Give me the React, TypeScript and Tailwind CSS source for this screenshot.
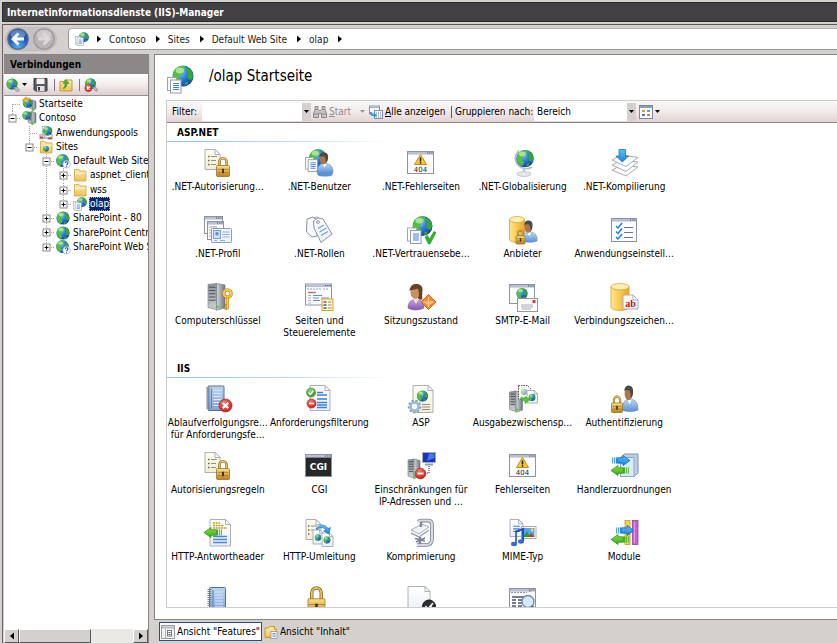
import type { ReactNode } from "react";

/* ---------- shared gradients ---------- */

function Gradients() {
  const linear: [string, string, string, boolean][] = [
    ["gold", "#fbe08a", "#b9821c", false],
    ["db", "#ffe88a", "#f0a61c", true],
    ["steel", "#d3d8db", "#6f777c", true],
    ["steelFront", "#8d959a", "#c9ced1", false],
    ["blueBody", "#b9d6f5", "#5b93d4", false],
    ["purple", "#c4a5e0", "#8257b3", false],
    ["blueArrow", "#58c4fb", "#1c7fd6", false],
    ["greenArrow", "#8be33c", "#36a81b", false],
    ["page", "#ffffff", "#e9eef6", false],
    ["cream", "#fffdf0", "#f1edcf", false],
    ["folder", "#fdedb0", "#eebf52", false],
    ["book", "#bcd3f2", "#7ea2d6", false],
  ];
  return (
    <svg className="absolute h-0 w-0" aria-hidden="true">
      <defs>
        {linear.map(([id, a, b, horizontal]) => (
          <linearGradient key={id} id={id} x1="0" y1="0" x2={horizontal ? "1" : "0"} y2={horizontal ? "0" : "1"}>
            <stop offset="0" stopColor={a} />
            <stop offset="1" stopColor={b} />
          </linearGradient>
        ))}
        <radialGradient id="ocean" cx="0.35" cy="0.3" r="0.8">
          <stop offset="0" stopColor="#8fd0ff" />
          <stop offset="0.45" stopColor="#2f7be0" />
          <stop offset="1" stopColor="#0f359c" />
        </radialGradient>
        <radialGradient id="nav" cx="0.5" cy="0.85" r="0.9">
          <stop offset="0" stopColor="#4fb4f2" />
          <stop offset="0.5" stopColor="#1f5fc0" />
          <stop offset="1" stopColor="#1a3f93" />
        </radialGradient>
        <radialGradient id="redBall" cx="0.4" cy="0.3" r="0.8">
          <stop offset="0" stopColor="#f47a6c" />
          <stop offset="1" stopColor="#c0160f" />
        </radialGradient>
        <radialGradient id="greenBall" cx="0.4" cy="0.3" r="0.8">
          <stop offset="0" stopColor="#8ad86a" />
          <stop offset="1" stopColor="#2d8f22" />
        </radialGradient>
      </defs>
    </svg>
  );
}

/* ---------- drawing parts ---------- */

type Box = { x: number; y: number; w: number; h: number };

function Globe({ cx, cy, r }: { cx: number; cy: number; r: number }) {
  return (
    <g transform={`translate(${cx} ${cy}) scale(${r / 10})`}>
      <circle r="10" fill="url(#ocean)" />
      <path d="M-8.6 -4.6 C-6 -9 -2 -9.8 1 -9.4 L3 -7 L0 -5.5 L1 -3 L-2.5 -1 L-4 2 L-1 3.5 L-2 7 L-4 8.6 C-7.5 6.5 -9.6 2.5 -9.5 -1 Z" fill="#52c233" />
      <path d="M4 -8.6 C7.5 -6.6 9.4 -3.5 9.6 0 L8 4 L5.5 3 L3.5 0 L5 -3 L3 -5.5 Z" fill="#35a82d" />
      <path d="M2 6 L5 5.4 L4.5 8 L1.5 9 Z" fill="#3aa82c" />
      <ellipse cx="-3" cy="-5.2" rx="4" ry="2.8" fill="#fff" opacity="0.5" />
    </g>
  );
}

function Doc({ x, y, w, h, cream, lines }: Box & { cream?: boolean; lines?: boolean }) {
  const f = Math.min(5, w / 3);
  return (
    <g stroke="#a3a7b4" strokeWidth="0.9">
      <path d={`M${x} ${y}h${w - f}l${f} ${f}v${h - f}h${-w}z`} fill={cream ? "url(#cream)" : "url(#page)"} />
      <path d={`M${x + w - f} ${y}v${f}h${f}z`} fill="#fff" />
      {lines && (
        <path
          d={`M${x + w * 0.25} ${y + h * 0.4}h${w * 0.5}M${x + w * 0.25} ${y + h * 0.55}h${w * 0.5}M${x + w * 0.25} ${y + h * 0.7}h${w * 0.5}`}
          stroke="#3f7fd6"
          strokeWidth="1.1"
        />
      )}
    </g>
  );
}

function Sheets({ x, y, s = 1 }: { x: number; y: number; s?: number }) {
  return (
    <g transform={`translate(${x} ${y}) scale(${s})`}>
      <rect x="0.5" y="0.5" width="9" height="13" fill="#fff" stroke="#a0a4ae" />
      <rect x="3.5" y="3" width="10.5" height="13" fill="#fff" stroke="#9298a6" />
      <path d="M6 6.5h6M6 8.5h6M6 10.5h6M6 12.5h6" stroke="#3c7ee0" />
    </g>
  );
}

function Win({ x, y, w, h, fill = "#fdfdff" }: Box & { fill?: string }) {
  return (
    <g>
      <rect x={x + 0.5} y={y + 0.5} width={w - 1} height={h - 1} fill={fill} stroke="#8e93a3" />
      <rect x={x + 1} y={y + 1} width={w - 2} height="2.6" fill="#b9c0d6" />
      <path d={`M${x + w - 7} ${y + 2}h1.2m1 0h1.2m1 0h1.2`} stroke="#4b5577" />
    </g>
  );
}

function Lock({ x, y, w, h }: Box) {
  const b = h * 0.42;
  const shackle = `M${x + w * 0.22} ${y + b + 1}V${y + w * 0.36}a${w * 0.28} ${w * 0.3} 0 0 1 ${w * 0.56} 0V${y + b + 1}`;
  return (
    <g>
      <path d={shackle} fill="none" stroke="#8a651c" strokeWidth={w * 0.2} />
      <path d={shackle} fill="none" stroke="#e6c26c" strokeWidth={w * 0.11} />
      <rect x={x} y={y + b} width={w} height={h - b} rx="1" fill="url(#gold)" stroke="#8f671a" strokeWidth="0.7" />
      <path
        d={`M${x + 1} ${y + b + (h - b) * 0.35}h${w - 2}M${x + 1} ${y + b + (h - b) * 0.65}h${w - 2}`}
        stroke="#a67823"
        strokeWidth="0.8"
      />
      <rect x={x + w * 0.43} y={y + b + (h - b) * 0.3} width={w * 0.14} height={(h - b) * 0.4} fill="#3d2a08" />
    </g>
  );
}

function Person({ x, y, body = "url(#blueBody)" }: { x: number; y: number; body?: string }) {
  return (
    <g transform={`translate(${x} ${y})`}>
      <path d="M0 19C0 13 3 10.5 8 10.5S16 13 16 19C12 20.6 4 20.6 0 19Z" fill={body} stroke="#5f7fae" strokeWidth="0.5" />
      <path d="M5.5 10.6L7.5 14.5L9.6 10.6Z" fill="#fff" />
      <ellipse cx="6.6" cy="6" rx="4" ry="5.2" fill="#a9784c" />
      <path d="M2.4 4C2.4 0.6 5 -0.6 7.4 -0.4C10.6 -0.2 11.6 2.6 11 5.4C10.6 8 9.6 9 8.6 9.4C9 7 8.6 5.4 7.6 3.6C6 3 4 3 2.4 4Z" fill="#4a4948" />
    </g>
  );
}

function Server({ x, y, w, h }: Box) {
  return (
    <g>
      <path d={`M${x} ${y + 1}l${w * 0.5} -1v${h - 1}l${-w * 0.5} -2z`} fill="url(#steelFront)" stroke="#6c7377" strokeWidth="0.6" />
      <path d={`M${x + w * 0.5} ${y}l${w * 0.5} 1.4v${h - 4}l${-w * 0.5} 2.4z`} fill="url(#steel)" stroke="#6c7377" strokeWidth="0.6" />
      {[0.14, 0.26, 0.38, 0.5, 0.62].map((t) => (
        <path key={t} d={`M${x + 1} ${y + h * t}h${w * 0.5 - 2}`} stroke="#4b555a" strokeWidth="1" />
      ))}
      <circle cx={x + w * 0.6} cy={y + h * 0.86} r="1.2" fill="#4bd433" />
    </g>
  );
}

function Database({ x, y, w, h }: Box) {
  const r = h * 0.12;
  return (
    <g stroke="#d39a22" strokeWidth="0.7">
      <path d={`M${x} ${y + r}v${h - 2 * r}a${w / 2} ${r} 0 0 0 ${w} 0v${-(h - 2 * r)}z`} fill="url(#db)" />
      <ellipse cx={x + w / 2} cy={y + r} rx={w / 2} ry={r} fill="#fff1b0" />
    </g>
  );
}

function Notebook({ x, y }: { x: number; y: number }) {
  return (
    <g transform={`translate(${x} ${y})`}>
      <rect x="2.5" y="0.5" width="16" height="24.5" rx="1" fill="url(#book)" stroke="#54709e" />
      <path d="M6 3v20" stroke="#5f82bb" />
      <path d="M8 5h8M8 8h8M8 11h8M8 14h8M8 17h8M8 20h8" stroke="#dbe8fa" />
      {[2, 4, 6, 8, 10, 12, 14, 16, 18, 20, 22].map((t) => (
        <path key={t} d={`M0.5 ${t + 0.5}h4`} stroke="#7b8290" />
      ))}
    </g>
  );
}

function Ball({ cx, cy, r, kind }: { cx: number; cy: number; r: number; kind: "x" | "minus" | "check" }) {
  const mark =
    kind === "x" ? "M-4 -4L4 4M4 -4L-4 4" : kind === "minus" ? "M-5.5 0H5.5" : "M-5 0L-1.5 4L5 -4";
  return (
    <g transform={`translate(${cx} ${cy}) scale(${r / 10})`}>
      <circle r="9.6" fill={kind === "check" ? "url(#greenBall)" : "url(#redBall)"} stroke={kind === "check" ? "#2f7d24" : "#9e2019"} />
      <path d={mark} fill="none" stroke="#fff" strokeWidth="3.2" />
    </g>
  );
}

function Arrow({ x, y, left }: { x: number; y: number; left?: boolean }) {
  return (
    <g transform={left ? `translate(${x + 18} ${y}) scale(-1 1)` : `translate(${x} ${y})`}>
      <path d="M5.5 2.8H11V0.5L18 5.5L11 10.5V8.2H5.5Z" fill={left ? "url(#greenArrow)" : "url(#blueArrow)"} stroke={left ? "#2f8f1a" : "#1a66b0"} strokeWidth="0.8" />
      <path d="M0.7 2.4v6.2M2.7 2.4v6.2M4.5 2.4v6.2" stroke={left ? "#46b324" : "#2c8fe0"} />
    </g>
  );
}

const permissions = (
  <g>
    <Doc x={1} y={0.5} w={15} h={20} cream />
    <path d="M4 7.5h1.5M4 11.5h1.5M4 15.5h1.5" stroke="#6b6448" strokeWidth="1.6" />
    <path d="M7 7.5h6M7 11.5h5M7 15.5h5" stroke="#8f8f86" />
    <Lock x={12.5} y={8.5} w={13} h={19} />
  </g>
);

const errorPage = (
  <g>
    <Win x={0} y={2} w={27} h={23} />
    <path d="M13.5 5.5L19.5 15.5H7.5Z" fill="#ffc928" stroke="#c98b0c" strokeLinejoin="round" />
    <path d="M13.5 8.5v4M13.5 13.3v1.4" stroke="#222" strokeWidth="1.6" />
    <text x="13.5" y="23" textAnchor="middle" fontSize="7" fill="#222" fontFamily="DejaVu Sans, sans-serif">
      404
    </text>
  </g>
);

/* ---------- feature icons, 28 x 28 ---------- */

const icons: Record<string, ReactNode> = {
  permissions,
  errorPage,
  users: (
    <g>
      <Globe cx={13} cy={9} r={9} />
      <Sheets x={0} y={8} s={0.9} />
      <Person x={12} y={4} />
      <path d="M12 23C12 27 14 27.5 20 27.5S28 27 28 23Z" fill="#5b93d4" />
    </g>
  ),
  globalization: (
    <g>
      <path d="M10 1.5C3.5 7 6 17.5 15 19.5C18 20 21 19.4 23 18" fill="none" stroke="#b9bdc1" strokeWidth="1.6" />
      <path d="M15 19v5" stroke="#c4c8cc" strokeWidth="2.4" />
      <ellipse cx="15" cy="25" rx="7" ry="2.4" fill="#e6e8ea" stroke="#b9bdc1" strokeWidth="0.8" />
      <Globe cx={16} cy={9.5} r={8.8} />
    </g>
  ),
  compile: (
    <g fill="#fff" stroke="#a6abb2" strokeLinejoin="round">
      <path d="M2 21L12 16L28 18L16 27Z" />
      <path d="M2 16L12 11L28 13L16 22.5Z" />
      <path d="M2 11L12 6L28 8.5L16 17.5Z" />
      <path d="M9 0.5h6.5v6.5h3.2L12.3 13L6 7H9Z" fill="url(#blueArrow)" stroke="#2375bd" strokeWidth="0.8" />
    </g>
  ),
  profile: (
    <g>
      <Win x={0} y={0} w={19} h={18} />
      <Win x={3} y={5} w={17} h={19} />
      <path d="M5 11h8M5 14h3M5 17h3M5 20h3" stroke="#9aa1b3" />
      <rect x="7.5" y="12.5" width="20" height="14" rx="1" fill="#eef3fa" stroke="#8f9bb2" />
      <rect x="9.5" y="14.5" width="7" height="8" fill="#cfe0f6" stroke="#7ba1dc" />
      <circle cx="13" cy="17.8" r="1.8" fill="#5f90d6" />
      <path d="M18.5 16h7M18.5 18.5h7M18.5 21h7M10 24.5h3m3 0h5" stroke="#8fb0e0" />
    </g>
  ),
  roles: (
    <g stroke="#8b93a3">
      <path d="M2 3L8 1L12 4V20L7 21L1.5 16Z" fill="#f7f8fb" />
      <path d="M9 3C11 -0.5 15 1 14.5 5" fill="none" />
      <path d="M8.5 5L13 2L18 3L27 18L16 26.5L9 12Z" fill="url(#page)" strokeLinejoin="round" />
      <circle cx="13" cy="6" r="1.4" fill="#fff" />
      <path d="M13 12.5L19 9M14.5 16L21.5 12M16 19.5L23 15.5" stroke="#6d9ce0" strokeWidth="1.2" />
    </g>
  ),
  trust: (
    <g>
      <Globe cx={15.5} cy={10} r={10} />
      <Sheets x={0} y={11.5} />
      <path d="M18 21L20.5 19.5L22.5 23L27 15.5L29 16.5L23 28H21.5Z" fill="#34b52a" stroke="#1f8a1c" strokeWidth="0.6" />
    </g>
  ),
  providers: (
    <g>
      <Database x={0.5} y={0.5} w={15} h={26} />
      <g transform="translate(13 5) scale(0.95 1.05)">
        <Person x={0} y={0} />
      </g>
      <Lock x={7} y={14} w={9} h={14} />
    </g>
  ),
  settings: (
    <g>
      <Win x={1} y={2} w={26} h={24} />
      <path d="M6 10l2 2 4-5M6 15.5l2 2 4-5M6 21l2 2 4-5" fill="none" stroke="#1e7fe0" strokeWidth="1.5" />
      <path d="M14 11.5h9M14 16.5h9M14 21.5h9" stroke="#6c7387" />
    </g>
  ),
  machineKey: (
    <g>
      <Server x={4} y={0.5} w={17} h={27} />
      <circle cx="23.5" cy="10.5" r="3.7" fill="none" stroke="#c98518" strokeWidth="3.2" />
      <circle cx="23.5" cy="10.5" r="3.7" fill="none" stroke="#ffc845" strokeWidth="2" />
      <path d="M23.5 14.5V26.5M23.5 25.5h-3M23.5 22h-2.6" stroke="#d08b16" strokeWidth="2.6" />
      <path d="M23.5 14.5V26" stroke="#ffc845" strokeWidth="1.2" />
    </g>
  ),
  controls: (
    <g>
      <Win x={0} y={0.5} w={27} h={22} />
      <path d="M2 6h14m2 0h6" stroke="#9ba2b4" strokeDasharray="2 1" />
      <path d="M3 9.5h8" stroke="#d86a5a" strokeWidth="1.4" />
      <path d="M3 12.5h3M3 15h3M3 17.5h3M3 20h3" stroke="#a6adbd" />
      <path d="M8 12.5h9M8 15h6m2 0h8M8 17.5h7" stroke="#5f8ed8" strokeWidth="1.2" />
      <rect x="17" y="16" width="11" height="11.5" fill="#fdf6cf" stroke="#d6a519" />
      <path d="M18.5 19h3M18.5 22h3M18.5 25h3" stroke="#7187ad" strokeWidth="1.8" />
      <path d="M23 19h3.5M23 22h3.5M23 25h3.5" stroke="#8b8f78" />
    </g>
  ),
  session: (
    <g>
      <path d="M1 25C1 19 4 16.5 9 16.5S17 19 17 25C13 27.6 4 27.6 1 25Z" fill="url(#purple)" stroke="#6c4699" strokeWidth="0.5" />
      <path d="M6 16L9 21L12 16Z" fill="#f6dfc2" />
      <ellipse cx="8.5" cy="9.5" rx="5" ry="6.5" fill="#c79163" />
      <path d="M2.5 8C3 2.5 6 0.5 10 1C15 1.6 16 5 15.4 9C15 12.6 15 14.6 15.6 16.6C13 17 11.6 16.4 11 15C12.6 12 12 8.6 10.6 5.6C8 6.8 5 6.6 2.5 8Z" fill="#6d3f22" />
      <path d="M21.5 11.5L29 19L21.5 26.5L14 19Z" fill="#f58a2a" stroke="#c4560c" strokeWidth="0.8" />
      <path d="M16.5 19h10M21.5 14v10M17 19l4.5 2.5L26 19" stroke="#ffd9a8" fill="none" strokeWidth="0.9" />
    </g>
  ),
  smtp: (
    <g>
      <Win x={0} y={1} w={26} h={20} />
      <Globe cx={13} cy={10.5} r={5.6} />
      <rect x="8.5" y="15.5" width="20" height="13" fill="#fdfdfd" stroke="#9397a4" />
      <rect x="23.5" y="17" width="3" height="3" fill="#d93a2e" />
      <path d="M12 22h12M12 24h12M13 26h9" stroke="#a6a9b3" />
    </g>
  ),
  connection: (
    <g>
      <Database x={1} y={0.5} w={18} h={27} />
      <Doc x={13} y={12} w={15} h={14} />
      <text x="20.5" y="23.5" textAnchor="middle" fontSize="10" fontWeight="bold" fill="#b01616" fontFamily="Liberation Serif, serif">
        ab
      </text>
    </g>
  ),
  failedRequests: (
    <g>
      <Notebook x={1.5} y={0.5} />
      <Ball cx={21.5} cy={20.5} r={6.8} kind="x" />
    </g>
  ),
  filtering: (
    <g>
      <Doc x={5} y={0.5} w={20} h={25} />
      <path d="M12 7.5h6M12 10h10M12 14h10M12 17.5h10M12 20h10M12 22.5h10" stroke="#3f7fd6" strokeWidth="1.3" />
      <Ball cx={6} cy={7.5} r={4.8} kind="check" />
      <Ball cx={6.5} cy={18.5} r={4.8} kind="minus" />
    </g>
  ),
  asp: (
    <g>
      <Doc x={6} y={0.5} w={20} h={27} cream />
      <Globe cx={15.5} cy={11} r={5.6} />
      <path d="M15 19.5h8M15 22h8M15 24.5h8" stroke="#8e92a0" />
      <circle cx="7.5" cy="21.5" r="5.6" fill="none" stroke="#7f9fc6" strokeWidth="2.4" strokeDasharray="2.2 1.6" />
      <circle cx="7.5" cy="21.5" r="4" fill="#fff" stroke="#9db8da" strokeWidth="2.6" />
    </g>
  ),
  outputCache: (
    <g>
      <Server x={0.5} y={6} w={13} h={21.5} />
      <path d="M9.5 0.5h9l3 3v10.5h-12z" fill="#f4f8f4" stroke="#555" strokeDasharray="1.5 1" />
      <g opacity="0.5">
        <Globe cx={15} cy={7} r={3} />
      </g>
      <Doc x={18} y={5.5} w={10.5} h={12.5} />
      <Globe cx={23} cy={12.5} r={3.4} />
      <path d="M12 12C12 15 14 16 16 16V18.5L21 14.8L16 11.5V13.4Z" fill="#53c932" stroke="#2d8f1c" strokeWidth="0.5" />
    </g>
  ),
  authentication: (
    <g>
      <g transform="translate(12 0.5) scale(1 1.25)">
        <Person x={0} y={0.5} />
      </g>
      <Lock x={1.5} y={11} w={11} h={16.5} />
    </g>
  ),
  cgi: (
    <g>
      <Win x={0} y={2} w={27} h={23} fill="#26282c" />
      <text x="13.5" y="17.5" textAnchor="middle" fontSize="9" fontWeight="bold" fill="#fff" fontFamily="DejaVu Sans, sans-serif">
        CGI
      </text>
    </g>
  ),
  ipRestrictions: (
    <g>
      <Server x={1} y={7} w={12} h={20} />
      <rect x="15.5" y="0.5" width="13" height="10" fill="#1737b8" stroke="#a9adb5" />
      <path d="M22 1.5h5.5v4.5L20 9Z" fill="#4d74ec" />
      <path d="M18 12.5h8" stroke="#9a9ea6" strokeWidth="2" />
      <path d="M22 14v7h-4" fill="none" stroke="#333" strokeDasharray="1 1" />
      <Ball cx={13.5} cy={21.5} r={5.6} kind="minus" />
    </g>
  ),
  handlers: (
    <g>
      <path d="M10.5 5.5L14.5 2H28V21L24 24.5H10.5Z" fill="#b9cfe8" stroke="#7d93b2" />
      <path d="M10.5 5.5H24V24.5H10.5Z" fill="#dce9f7" stroke="#8ea6c6" />
      <Arrow x={2} y={3} />
      <Arrow x={1} y={13} left />
    </g>
  ),
  responseHeaders: (
    <g>
      <Doc x={6} y={0.5} w={20.5} h={26.5} />
      <path d="M9 4h7M9 6.5h11M9 9h14" stroke="#c79c1d" strokeWidth="1.6" strokeDasharray="2 0.7" />
      <path d="M9 17.5h14M9 20.5h14M9 23.5h14" stroke="#4a86d8" strokeWidth="1.3" />
      <Arrow x={0} y={8} left />
    </g>
  ),
  redirect: (
    <g>
      <Doc x={1} y={0.5} w={15} h={20} cream />
      <path d="M3 7h1.5M3 11h1.5M3 15h1.5" stroke="#6b6448" strokeWidth="1.6" />
      <path d="M6 7h6M6 11h3" stroke="#8f8f86" />
      <Doc x={8} y={11} w={10} h={14} />
      <Globe cx={13} cy={18.5} r={3.2} />
      <Doc x={17} y={14} w={11} h={13.5} />
      <Globe cx={22} cy={21} r={3.4} />
      <path d="M11 10C13 5.5 20 4.5 23 9.5L25.5 8.5L24 15L18.5 12L20.8 10.8C18.5 7.5 14 8.5 13 10.5Z" fill="url(#blueArrow)" stroke="#1c66b0" strokeWidth="0.6" />
    </g>
  ),
  compression: (
    <g>
      <path d="M12 2.5C12 1.8 13 1.6 14 1.6H21C24 1.6 25 3 25 5.4V20C25 24 23 26 19 26H10" fill="none" stroke="#7b8391" strokeWidth="3.6" />
      <path d="M12 2.5C12 1.8 13 1.6 14 1.6H21C24 1.6 25 3 25 5.4V20C25 24 23 26 19 26H10" fill="none" stroke="#d3dae4" strokeWidth="2" />
      <path d="M4 11L15 5L22 8L12 15Z" fill="#f0f2f6" stroke="#8f96aa" strokeWidth="0.8" />
      <path d="M4 14L12 18L22 11" fill="none" stroke="#9aa1b0" strokeWidth="1.4" />
      <path d="M14 3v5M13 18v7" stroke="#7d8596" strokeWidth="2.4" />
      <path d="M8 19.5L18 22M9 23L18 19" stroke="#7b8391" strokeWidth="1.8" />
    </g>
  ),
  mime: (
    <g>
      <Doc x={1} y={0.5} w={13} h={17} lines />
      <rect x="12.5" y="7.5" width="14.5" height="12" fill="#fff" stroke="#a6aab6" />
      <rect x="14" y="9" width="11.5" height="9" fill="#5aa6ee" />
      <path d="M14 18L18 12L21.5 18Z" fill="#2e9e2b" />
      <path d="M19 18l3.4-4 3.1 4z" fill="#c0392b" />
      <circle cx="23" cy="11" r="1.4" fill="#ffd84a" />
      <path d="M7 12.5L14 10V22" fill="none" stroke="#2450b8" strokeWidth="2.2" />
      <path d="M7 12V25" stroke="#2450b8" strokeWidth="1.6" />
      <ellipse cx="5" cy="25" rx="3" ry="2.2" fill="#3768d2" />
      <ellipse cx="12" cy="22.5" rx="3" ry="2.2" fill="#3768d2" />
    </g>
  ),
  modules: (
    <g>
      <rect x="15" y="1.5" width="5" height="24" fill="#f6d34c" stroke="#c79a1c" strokeWidth="0.8" />
      <rect x="22.5" y="1.5" width="5.5" height="24" fill="#c862d0" stroke="#9a3aa2" strokeWidth="0.8" />
      <path d="M24.3 3v21" stroke="#e8a6ec" />
      <Arrow x={6} y={6} />
      <Arrow x={1} y={15} left />
    </g>
  ),
  logging: <Notebook x={3} y={1} />,
  ssl: <Lock x={3} y={1} w={17} h={28} />,
  defaultDoc: (
    <g>
      <Doc x={1} y={0.5} w={22} h={27} />
      <circle cx="22" cy="20.5" r="6.5" fill="#2d2f33" stroke="#111" />
      <path d="M18.5 20l2.5 3 5-6M24 19v6" fill="none" stroke="#fff" strokeWidth="1.6" />
    </g>
  ),
  directory: (
    <g>
      <Win x={0} y={2} w={27} h={25} />
      <path d="M2 6.5h16" stroke="#8d94a8" strokeDasharray="2 1" />
      <path d="M20 5.5h2" stroke="#d89a22" />
      <path d="M3 11h12M3 14h4m2 0h4M3 17h4m2 0h4M3 20h4m2 0h4" stroke="#4c5263" strokeWidth="1.3" />
      <circle cx="19" cy="15.5" r="6" fill="#d6eafb" stroke="#6e8db4" strokeWidth="1.4" />
      <path d="M23 20l3.5 4" stroke="#555b66" strokeWidth="2" />
    </g>
  ),
};

function FeatureIcon({ name }: { name: string }) {
  return (
    <svg viewBox="0 0 28 28" className="h-7 w-7 shrink-0 overflow-visible" aria-hidden="true">
      {icons[name]}
    </svg>
  );
}

/* ---------- 14px icons ---------- */

const folder = (
  <g>
    <path d="M1.5 3V1.5H6L7 3H13V13H1.5Z" fill="url(#folder)" stroke="#d3a94f" strokeWidth="0.9" />
    <path d="M2 5.2h10.6" stroke="#fff6d2" />
  </g>
);

const smallIcons: Record<string, ReactNode> = {
  folder,
  start: (
    <g>
      <Server x={7.5} y={3} w={6.5} h={11} />
      <Globe cx={5.6} cy={6} r={4.8} />
      <path d="M0.5 4L4 0.5L6 3L8 1" stroke="#f0a02a" strokeWidth="1.8" fill="none" />
    </g>
  ),
  server: (
    <g>
      <Server x={6} y={0.5} w={8} h={13.5} />
      <Globe cx={4.5} cy={4.5} r={4.2} />
    </g>
  ),
  pools: (
    <g>
      <Sheets x={3} y={0} s={0.7} />
      <Globe cx={8.5} cy={5} r={4.6} />
      <path d="M1 8V12.5H13V8M1 10L4 7.5L7 10" fill="none" stroke="#b9bec8" strokeWidth="1.6" />
      <path d="M1 11.5h3.4M9 12.4h4" stroke="#cf3a30" strokeWidth="1.8" />
    </g>
  ),
  sites: (
    <g>
      {folder}
      <Globe cx={7} cy={8.8} r={2.8} />
    </g>
  ),
  globe: <Globe cx={7} cy={7} r={6.6} />,
  unknownSite: (
    <g>
      <Globe cx={6.5} cy={6.5} r={6.4} />
      <circle cx="10.6" cy="10.2" r="3.8" fill="#fff" stroke="#8fa3c9" strokeWidth="0.6" />
      <path d="M9.2 9C9.2 7.4 12 7.4 12 9C12 10 10.6 10 10.6 11.2M10.6 12.2V13.2" fill="none" stroke="#1f4db8" strokeWidth="1.1" />
    </g>
  ),
  app: (
    <g>
      <Globe cx={8.8} cy={5.2} r={5} />
      <Sheets x={0} y={4} s={0.6} />
    </g>
  ),
};

function SmallIcon({ name }: { name: string }) {
  return (
    <svg viewBox="0 0 14 14" className="h-[14px] w-[14px] shrink-0 overflow-visible" aria-hidden="true">
      {smallIcons[name]}
    </svg>
  );
}

/* ---------- title and address bars ---------- */

function RightCaret() {
  return (
    <svg viewBox="0 0 4 8" className="h-2 w-1 shrink-0" aria-hidden="true">
      <path d="M0 0.5L4 4L0 7.5Z" fill="#000" />
    </svg>
  );
}

function DownCaret({ muted }: { muted?: boolean }) {
  return (
    <svg viewBox="0 0 5 3" className="h-[3px] w-[5px] shrink-0" aria-hidden="true">
      <path d="M0 0H5L2.5 3Z" fill={muted ? "#9a9696" : "#000"} />
    </svg>
  );
}

function NavButton({ forward }: { forward?: boolean }) {
  return (
    <button type="button" aria-label={forward ? "Vorwärts" : "Zurück"} className="h-[22px] w-[22px] rounded-full">
      <svg viewBox="0 0 22 22" className="h-[22px] w-[22px]" aria-hidden="true">
        <circle cx="11" cy="11" r="10.2" fill={forward ? "#b9b4b7" : "url(#nav)"} stroke={forward ? "#9b9699" : "#5c6a88"} strokeWidth="1.2" />
        <ellipse cx="11" cy="6.4" rx="7.4" ry="4.4" fill="#fff" opacity="0.3" />
        <g transform={forward ? "translate(22 0) scale(-1 1)" : undefined}>
          <path d="M11.5 5.5L6 11L11.5 16.5M6.4 11H17" fill="none" stroke={forward ? "#dedadc" : "#fff"} strokeWidth="2.8" />
        </g>
      </svg>
    </button>
  );
}

const crumbs = ["Contoso", "Sites", "Default Web Site", "olap"];

function AddressBar() {
  return (
    <div className="flex h-[30px] items-center border-t border-[#5d5557] pb-px pl-0.5">
      <div className="mr-[11px] flex gap-1 rounded-full border border-[#bdb8ba] bg-[#c6c1c3] px-px">
        <NavButton />
        <NavButton forward />
      </div>
      <nav
        aria-label="Pfad"
        className="flex h-[22px] flex-1 items-center rounded-l border border-r-0 border-[#9d9898] border-t-[#b5aeb0] bg-white pl-1.5"
      >
        <SmallIcon name="app" />
        <span className="ml-2 flex items-center">
          <RightCaret />
        </span>
        {crumbs.map((c) => (
          <span key={c} className="flex items-center">
            <a href="#" className="mr-2.5 ml-2 whitespace-nowrap text-[#222]">
              {c}
            </a>
            <RightCaret />
          </span>
        ))}
      </nav>
    </div>
  );
}

/* ---------- connections pane ---------- */

type Guide = "none" | "line" | "tee" | "end" | "first";
type Node = { label: string; icon: string; guides: Guide[]; open?: boolean; selected?: boolean };

const tree: Node[] = [
  { label: "Startseite", icon: "start", guides: ["first"] },
  { label: "Contoso", icon: "server", guides: ["end"], open: true },
  { label: "Anwendungspools", icon: "pools", guides: ["none", "tee"] },
  { label: "Sites", icon: "sites", guides: ["none", "end"], open: true },
  { label: "Default Web Site", icon: "unknownSite", guides: ["none", "none", "tee"], open: true },
  { label: "aspnet_client", icon: "folder", guides: ["none", "none", "line", "tee"], open: false },
  { label: "wss", icon: "folder", guides: ["none", "none", "line", "tee"], open: false },
  { label: "olap", icon: "app", guides: ["none", "none", "line", "end"], open: false, selected: true },
  { label: "SharePoint - 80", icon: "globe", guides: ["none", "none", "tee"], open: false },
  { label: "SharePoint Centr", icon: "globe", guides: ["none", "none", "tee"], open: false },
  { label: "SharePoint Web S", icon: "unknownSite", guides: ["none", "none", "end"], open: false },
];

function GuideCell({ kind, open }: { kind: Guide; open?: boolean }) {
  const dots = { stroke: "#a5a1a1", strokeDasharray: "1 1" };
  return (
    <svg className="h-full w-[17px] shrink-0" aria-hidden="true">
      {(kind === "line" || kind === "tee") && <line x1="8.5" x2="8.5" y1="0" y2="100%" {...dots} />}
      {kind === "end" && <line x1="8.5" x2="8.5" y1="0" y2="7" {...dots} />}
      {kind === "first" && <line x1="8.5" x2="8.5" y1="7" y2="100%" {...dots} />}
      {(kind === "tee" || kind === "end" || kind === "first") && <line x1="9" x2="17" y1="7.5" y2="7.5" {...dots} />}
      {open !== undefined && (
        <g>
          <rect x="5" y="4" width="7" height="7" fill="#fff" stroke="#8a8686" />
          <path d={open ? "M6.5 7.5h4" : "M6.5 7.5h4M8.5 5.5v4"} stroke="#000" />
        </g>
      )}
    </svg>
  );
}

function ToolSeparator() {
  return <span className="h-3 w-px bg-[#7d7779]" />;
}

function Connections() {
  return (
    <aside className="flex w-[145px] shrink-0 flex-col border-t border-r border-[#8a8384] bg-white">
      <h2 className="h-[19px] bg-[#8c8889] pl-1.5 text-[10px] leading-5 font-bold">Verbindungen</h2>
      <div className="flex h-[22px] items-center border-b border-[#9b8f91] bg-linear-to-b from-white via-[#f5ecec] to-[#dccfcf] pl-0.5">
        <button type="button" aria-label="Verbinden" className="flex items-center gap-0.5">
          <svg viewBox="0 0 14 14" className="h-[14px] w-[14px]" aria-hidden="true">
            <Globe cx={6} cy={6} r={5.6} />
            <path d="M8 9h3l2.5 3.5-2 1.2L9 12Z" fill="#b9bcc2" stroke="#6f7278" strokeWidth="0.6" />
          </svg>
          <DownCaret />
        </button>
        <button type="button" aria-label="Speichern" className="mr-1.5 ml-1.5">
          <svg viewBox="0 0 15 15" className="h-[15px] w-[15px]" aria-hidden="true">
            <path d="M1 1.5H14V14H2.5L1 12.5Z" fill="#5d5b60" stroke="#3a383c" />
            <rect x="3.5" y="1.5" width="8" height="5.5" fill="#f2f2f4" />
            <rect x="4" y="9" width="7.5" height="5" fill="#e3e3e6" />
            <rect x="5" y="10" width="2" height="3.5" fill="#3a383c" />
          </svg>
        </button>
        <ToolSeparator />
        <button type="button" aria-label="Nach oben" className="mr-1.5 ml-1">
          <svg viewBox="0 0 14 14" className="h-[14px] w-[14px]" aria-hidden="true">
            <path d="M1 3.5H5L6 2H13V13H1Z" fill="url(#folder)" stroke="#c49a3b" />
            <path d="M4 10.5C7 10.5 8 8 8 5.5H10L7 1.5L4 5.5H6C6 8 5.4 9.4 4 10.5Z" fill="#4fb53a" stroke="#2c8422" strokeWidth="0.5" />
          </svg>
        </button>
        <ToolSeparator />
        <button type="button" aria-label="Verbindung löschen" className="ml-1">
          <svg viewBox="0 0 14 14" className="h-[14px] w-[14px]" aria-hidden="true">
            <Globe cx={6.5} cy={5.6} r={5.4} />
            <path d="M9 9h2.4l2.4 3-1.6 1.2L9.4 11Z" fill="#b9bcc2" stroke="#6f7278" strokeWidth="0.6" />
            <Ball cx={4.4} cy={10} r={3.8} kind="x" />
          </svg>
        </button>
      </div>
      <ul className="grid h-[158px] auto-rows-fr overflow-hidden pt-px">
        {tree.map((n) => (
          <li key={n.label} className="flex min-h-0 items-center">
            {n.guides.map((g, i) => (
              <GuideCell key={i} kind={g} open={i === n.guides.length - 1 ? n.open : undefined} />
            ))}
            <span className="ml-px flex items-center gap-0.5">
              <SmallIcon name={n.icon} />
              <span
                className={
                  n.selected
                    ? "border border-dotted border-[#d8b060] bg-[#0a246a] text-[10px] leading-3 text-white"
                    : "border border-transparent text-[10px] leading-3 whitespace-nowrap"
                }
              >
                {n.label}
              </span>
            </span>
          </li>
        ))}
      </ul>
      <div className="mt-auto flex h-[14px] bg-[#ebe9e6]">
        <button
          type="button"
          aria-label="Nach links"
          className="flex w-[15px] items-center justify-center border border-t-white border-r-[#5a5657] border-b-[#5a5657] border-l-white bg-[#d4d0ce]"
        >
          <span className="rotate-180">
            <RightCaret />
          </span>
        </button>
        <div className="w-[72px] border border-t-white border-r-[#5a5657] border-b-[#5a5657] border-l-white bg-[#d4d0ce]" />
        <div className="flex-1" />
        <button
          type="button"
          aria-label="Nach rechts"
          className="flex w-[15px] items-center justify-center border border-t-white border-r-[#5a5657] border-b-[#5a5657] border-l-white bg-[#d4d0ce]"
        >
          <RightCaret />
        </button>
      </div>
    </aside>
  );
}

/* ---------- feature view ---------- */

type Feature = { lines: string[]; icon: string };

const aspNet: Feature[] = [
  { lines: [".NET-Autorisierung…"], icon: "permissions" },
  { lines: [".NET-Benutzer"], icon: "users" },
  { lines: [".NET-Fehlerseiten"], icon: "errorPage" },
  { lines: [".NET-Globalisierung"], icon: "globalization" },
  { lines: [".NET-Kompilierung"], icon: "compile" },
  { lines: [".NET-Profil"], icon: "profile" },
  { lines: [".NET-Rollen"], icon: "roles" },
  { lines: [".NET-Vertrauensebe…"], icon: "trust" },
  { lines: ["Anbieter"], icon: "providers" },
  { lines: ["Anwendungseinstell…"], icon: "settings" },
  { lines: ["Computerschlüssel"], icon: "machineKey" },
  { lines: ["Seiten und", "Steuerelemente"], icon: "controls" },
  { lines: ["Sitzungszustand"], icon: "session" },
  { lines: ["SMTP-E-Mail"], icon: "smtp" },
  { lines: ["Verbindungszeichen…"], icon: "connection" },
];

const iis: Feature[] = [
  { lines: ["Ablaufverfolgungsre…", "für Anforderungsfe…"], icon: "failedRequests" },
  { lines: ["Anforderungsfilterung"], icon: "filtering" },
  { lines: ["ASP"], icon: "asp" },
  { lines: ["Ausgabezwischensp…"], icon: "outputCache" },
  { lines: ["Authentifizierung"], icon: "authentication" },
  { lines: ["Autorisierungsregeln"], icon: "permissions" },
  { lines: ["CGI"], icon: "cgi" },
  { lines: ["Einschränkungen für", "IP-Adressen und …"], icon: "ipRestrictions" },
  { lines: ["Fehlerseiten"], icon: "errorPage" },
  { lines: ["Handlerzuordnungen"], icon: "handlers" },
  { lines: ["HTTP-Antwortheader"], icon: "responseHeaders" },
  { lines: ["HTTP-Umleitung"], icon: "redirect" },
  { lines: ["Komprimierung"], icon: "compression" },
  { lines: ["MIME-Typ"], icon: "mime" },
  { lines: ["Module"], icon: "modules" },
  { lines: [], icon: "logging" },
  { lines: [], icon: "ssl" },
  { lines: [], icon: "defaultDoc" },
  { lines: [], icon: "directory" },
];

function FeatureGroup({ title, features }: { title: string; features: Feature[] }) {
  return (
    <section>
      <h3 className="pl-2.5 text-[10px] leading-[17px] font-bold">{title}</h3>
      <div className="h-px w-[226px] bg-linear-to-r from-[#8ec2ff] via-[#b8d8fd] to-white" />
      <ul className="grid w-[508px] grid-cols-5 pt-[7px]">
        {features.map((f, i) => (
          <li key={i} className="h-[67px]">
            <a href="#" className="flex flex-col items-center text-center text-[10px] leading-3">
              <FeatureIcon name={f.icon} />
              <span className="flex flex-col pt-1 whitespace-nowrap">
                {f.lines.map((l) => (
                  <span key={l}>{l}</span>
                ))}
              </span>
            </a>
          </li>
        ))}
      </ul>
    </section>
  );
}

function Toolbar() {
  return (
    <div className="flex h-[22px] shrink-0 items-center border-b border-[#8f8284] bg-linear-to-b from-[#fbf9f9] via-[#f3eaea] to-[#e2d3d3] py-px text-[10px]">
      <label htmlFor="filter" className="w-[35px] pl-[5px]">
        Filter:
      </label>
      <div className="flex h-[18px] w-[109px] bg-white">
        <input id="filter" type="text" className="min-w-0 flex-1 bg-white px-1 outline-none" />
        <button type="button" aria-label="Filterliste" className="flex w-[9px] items-center justify-center bg-[#d4d0ce]">
          <DownCaret />
        </button>
      </div>
      <button type="button" className="ml-0.5 flex w-[45px] items-center gap-0.5 text-[#8f8b8c]">
        <svg viewBox="0 0 14 14" className="h-[14px] w-[14px] shrink-0" aria-hidden="true">
          <path d="M2 1.5h3v3l1 1h2l1-1v-3h3v3l1.5 4v4h-5v-4h-3v4h-5v-4L2 4.5Z" fill="#c9c5c6" stroke="#8c8889" />
          <path d="M1 9h4.5M8.5 9H13M2 4.5h3M9 4.5h3" stroke="#8c8889" />
        </svg>
        <span>
          <span className="underline">S</span>tart
        </span>
      </button>
      <button type="button" aria-label="Startoptionen" className="flex h-[18px] w-[11px] items-center pl-0.5">
        <DownCaret muted />
      </button>
      <button type="button" className="flex w-[82px] items-center gap-0.5 whitespace-nowrap">
        <svg viewBox="0 0 14 14" className="h-[14px] w-[14px] shrink-0" aria-hidden="true">
          <rect x="0.5" y="1" width="10" height="8" fill="#f6f8fc" stroke="#8790a6" />
          <path d="M1 2.5h9" stroke="#9eabc9" />
          <rect x="5.5" y="5.5" width="8" height="8" fill="#eef3fb" stroke="#8790a6" />
          <path d="M7 8h5M7 10h5M7 12h5" stroke="#6f8fd0" strokeDasharray="1 1" />
          <path d="M1 7C1 10 2.5 11.2 5 11.2V13L8 10.3L5 7.8V9.4C3.5 9.4 2.8 8.6 2.8 7Z" fill="#2f93e6" />
        </svg>
        <span>
          <span className="underline">A</span>lle anzeigen
        </span>
      </button>
      <span className="h-3 w-px bg-[#5d5759]" />
      <label htmlFor="grouping" className="w-[82px] pl-[3px] whitespace-nowrap">
        Gruppieren nach:
      </label>
      <div className="grid h-[18px] w-[102px] items-center bg-white">
        <select id="grouping" className="col-start-1 row-start-1 h-[18px] w-full appearance-none bg-white pl-[3px] text-[10px] outline-none">
          <option>Bereich</option>
        </select>
        <span className="pointer-events-none col-start-1 row-start-1 flex h-full w-[9px] items-center justify-center justify-self-end bg-[#d4d0ce]">
          <DownCaret />
        </span>
      </div>
      <button type="button" aria-label="Ansicht" className="ml-[3px] flex items-center gap-0.5">
        <svg viewBox="0 0 14 14" className="h-[14px] w-[14px]" aria-hidden="true">
          <rect x="0.5" y="0.5" width="13" height="13" fill="#fff" stroke="#7e88a0" />
          <path d="M1 2h12" stroke="#8f9cc4" strokeWidth="2" />
          <rect x="3" y="5" width="3" height="2" fill="#c9a04a" />
          <rect x="8" y="5" width="3" height="2" fill="#4fa2c9" />
          <rect x="3" y="9" width="3" height="2" fill="#5278d8" />
          <rect x="8" y="9" width="3" height="2" fill="#e0764a" />
        </svg>
        <DownCaret />
      </button>
    </div>
  );
}

function ViewTabs() {
  return (
    <div role="tablist" className="flex h-[23px] shrink-0 items-center gap-0.5 pl-[5px] text-[10px]">
      <button
        type="button"
        role="tab"
        aria-selected="true"
        className="flex h-[19px] items-center gap-0.5 border border-[#2f4a8f] bg-white px-px whitespace-nowrap"
      >
        <svg viewBox="0 0 14 14" className="h-[14px] w-[14px]" aria-hidden="true">
          <rect x="0.5" y="0.5" width="13" height="13" fill="#f2f2f2" stroke="#9a9aa2" />
          <path d="M1 2.5h12" stroke="#b4b8c6" strokeWidth="2" />
          <path d="M4.5 4v9" stroke="#b4b4ba" />
          <rect x="6.5" y="5.5" width="4" height="5.5" fill="#fff" stroke="#7c7c86" />
          <path d="M7.5 7.5h2M7.5 9.5h2" stroke="#55555c" />
        </svg>
        Ansicht "Features"
      </button>
      <button type="button" role="tab" aria-selected="false" className="flex h-[19px] items-center gap-0.5 whitespace-nowrap">
        <svg viewBox="0 0 14 14" className="h-[14px] w-[14px]" aria-hidden="true">
          <path d="M1 12.5V3H4.5L5.5 1.5H10.5V4H12.5L11 12.5Z" fill="url(#folder)" stroke="#c89433" />
          <rect x="7" y="6.5" width="6" height="7" fill="#fff" stroke="#8a90a2" strokeWidth="0.8" />
          <path d="M8.4 8.5h3.2M8.4 10h3.2M8.4 11.6h3.2" stroke="#4a7fd0" strokeWidth="0.8" />
        </svg>
        Ansicht "Inhalt"
      </button>
    </div>
  );
}

export default function App() {
  return (
    <div className="flex h-screen flex-col overflow-hidden bg-[#d4d0ce] font-['DejaVu_Sans_Condensed','DejaVu_Sans',Tahoma,sans-serif] text-[10px] text-black">
      <Gradients />
      <header className="mt-0.5 ml-0.5 h-5 shrink-0 border border-r-0 border-[#2f2c2f] bg-[#434043] pl-1">
        <h1 className="text-[10px] leading-5 font-bold whitespace-nowrap text-white">Internetinformationsdienste (IIS)-Manager</h1>
      </header>
      <div className="mt-0.5 ml-0.5 flex min-h-0 flex-1 flex-col border-l border-[#6e6365]">
        <AddressBar />
        <div className="flex min-h-0 flex-1 gap-[5px] pl-px">
          <Connections />
          <main className="flex min-w-0 flex-1 flex-col">
            <div className="flex min-h-0 flex-1 flex-col border border-r-0 border-[#8a8384] bg-white">
              <div className="flex h-[45px] shrink-0 items-start gap-3.5 pt-[11px] pl-3">
                <svg viewBox="0 0 28 28" className="h-7 w-7 overflow-visible" aria-hidden="true">
                  <Globe cx={16} cy={10} r={10.5} />
                  <Sheets x={0} y={11} />
                </svg>
                <h2 className="text-[15px] leading-5">/olap Startseite</h2>
              </div>
              <div className="mb-[11px] ml-[11px] flex min-h-0 flex-1 flex-col border border-r-0 border-[#cfcccd]">
                <Toolbar />
                <div className="flex min-h-0 flex-1 flex-col gap-[10px] overflow-hidden pt-px">
                  <FeatureGroup title="ASP.NET" features={aspNet} />
                  <FeatureGroup title="IIS" features={iis} />
                </div>
              </div>
            </div>
            <ViewTabs />
          </main>
        </div>
      </div>
    </div>
  );
}
